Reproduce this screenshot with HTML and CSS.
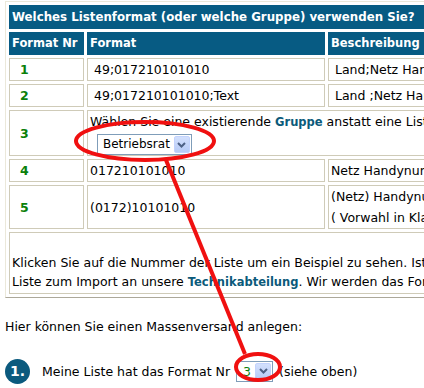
FILE: index.html
```html
<!DOCTYPE html>
<html lang="de">
<head>
  <meta charset="UTF-8">
  <title>Massenversand</title>
  <link rel="stylesheet" href="styles.css">
</head>
<body>
  <div class="page">
    <table class="formats">
      <colgroup>
        <col class="col-nr">
        <col class="col-format">
        <col>
      </colgroup>
      <tr><td colspan="3" class="title">Welches Listenformat (oder welche Gruppe) verwenden Sie?</td></tr>
      <tr class="head">
        <th>Format Nr</th>
        <th>Format</th>
        <th>Beschreibung</th>
      </tr>
      <tr>
        <td class="nr">1</td>
        <td>&nbsp;49;017210101010</td>
        <td>&nbsp;Land;Netz Handynummer</td>
      </tr>
      <tr>
        <td class="nr">2</td>
        <td>&nbsp;49;017210101010;Text</td>
        <td>&nbsp;Land ;Netz Handynummer ;Text</td>
      </tr>
      <tr>
        <td class="nr">3</td>
        <td colspan="2">
          Wählen Sie eine existierende <span class="link">Gruppe</span> anstatt eine Liste zu importieren:
          <div class="pick">
            <span class="select">Betriebsrat<span class="arrow"><svg width="9" height="6" viewBox="0 0 9 6"><path d="M1 1l3.5 3.5L8 1" fill="none" stroke="#4d6185" stroke-width="2"/></svg></span></span>
          </div>
        </td>
      </tr>
      <tr>
        <td class="nr">4</td>
        <td>017210101010</td>
        <td>Netz Handynummer</td>
      </tr>
      <tr>
        <td class="nr">5</td>
        <td>(0172)10101010</td>
        <td>(Netz) Handynummer<br>( Vorwahl in Klammern)</td>
      </tr>
      <tr>
        <td colspan="3" class="note">
          <br>
          Klicken Sie auf die Nummer der Liste um ein Beispiel zu sehen. Ist Ihr Format nicht dabei, senden Sie uns eine<br>
          Liste zum Import an unsere <span class="link">Technikabteilung</span>. Wir werden das Format dann aufnehmen.
        </td>
      </tr>
    </table>

    <p class="intro">Hier können Sie einen Massenversand anlegen:</p>

    <div class="step">
      <span class="badge">1.</span>
      <span>Meine Liste hat das Format Nr</span>
      <span class="select small"><span class="num">3</span><span class="arrow"><svg width="9" height="6" viewBox="0 0 9 6"><path d="M1 1l3.5 3.5L8 1" fill="none" stroke="#4d6185" stroke-width="2"/></svg></span></span>
      <span>(siehe oben)</span>
    </div>

    <svg class="marks" width="424" height="388" viewBox="0 0 424 388">
      <ellipse cx="145" cy="141" rx="69" ry="19" fill="none" stroke="#f01010" stroke-width="4"/>
      <line x1="166" y1="160" x2="245" y2="354" stroke="#f01010" stroke-width="4"/>
      <ellipse cx="258" cy="367" rx="22" ry="13" fill="none" stroke="#f01010" stroke-width="4"/>
    </svg>
  </div>
</body>
</html>
```

FILE: styles.css
```css
body {
  margin: 0;
  background-color: #fff;
  font-family: "DejaVu Sans", Verdana, sans-serif;
  font-size: 12.5px;
  color: #000;
  overflow: hidden;
}
.page {
  position: relative;
  width: 424px;
  height: 388px;
  padding: 1px 0 0 5px;
  box-sizing: border-box;
  overflow: hidden;
}
.formats {
  table-layout: fixed;
  width: 640px;
  border-collapse: separate;
  border-spacing: 3px;
  border: 1px solid;
  border-color: #ebe8da #aca899 #aca899 #ebe8da;
  line-height: 21px;
}
.col-nr { width: 75px; }
.col-format { width: 238px; }
.formats td, .formats th {
  border: 1px solid #cfcbb8;
  padding: 0 0 0 2px;
  text-align: left;
  vertical-align: middle;
  white-space: nowrap;
  overflow: hidden;
}
.formats .title {
  background-color: #075b83;
  color: #fff;
  font-weight: bold;
  font-size: 11.8px;
  border-color: #075b83;
  height: 22px;
}
.head th {
  background-color: #075b83;
  color: #fff;
  font-weight: bold;
  font-size: 11.5px;
  border-color: #075b83;
}
.formats .nr {
  padding-left: 10px;
  color: #0a800a;
  font-weight: bold;
}
.link {
  color: #0b5a7a;
  font-weight: bold;
  font-size: 11.5px;
}
.pick {
  padding-left: 7px;
}
.select {
  display: inline-flex;
  align-items: center;
  height: 21px;
  box-sizing: border-box;
  border: 1px solid #7f9db9;
  background: #fff;
  padding: 0 1px 0 5px;
  vertical-align: middle;
  line-height: 19px;
  font-size: 12px;
}
.select .arrow {
  display: flex;
  align-items: center;
  justify-content: center;
  width: 16px;
  height: 17px;
  margin-left: 4px;
  background: linear-gradient(#d3e0fd, #b6cbf6);
  border: 1px solid #c3d3fd;
  border-radius: 2px;
  box-sizing: border-box;
}
.select.small {
  padding-left: 6px;
  font-size: 12.5px;
}
.select .num {
  color: #0a800a;
}
.formats .note {
  line-height: 19.5px;
  padding: 0 0 0 2px;
}
.intro {
  margin: 21px 0 0;
}
.step {
  display: flex;
  align-items: center;
  gap: 6px;
  margin-top: 25px;
}
.badge {
  display: flex;
  align-items: center;
  justify-content: center;
  width: 25px;
  height: 25px;
  border-radius: 50%;
  background-color: #0b5a7e;
  color: #fff;
  font-weight: bold;
  font-size: 14px;
  margin-right: 6px;
}
.marks {
  position: absolute;
  left: 0;
  top: 0;
  pointer-events: none;
}
```
